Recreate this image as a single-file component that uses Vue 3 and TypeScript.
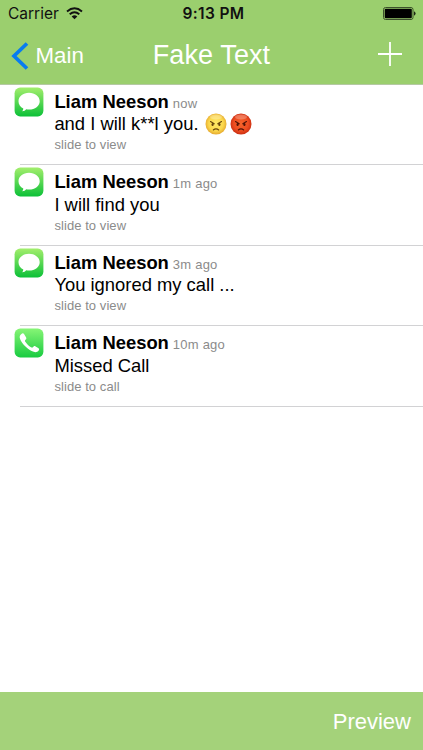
<script setup lang="ts">
interface Notice {
  id: number
  kind: 'message' | 'call'
  name: string
  time: string
  text: string
  hint: string
  faces?: string[]
}

const notices: Notice[] = [
  { id: 1, kind: 'message', name: 'Liam Neeson', time: 'now', text: 'and I will k**l you.', hint: 'slide to view', faces: ['yellow', 'red'] },
  { id: 2, kind: 'message', name: 'Liam Neeson', time: '1m ago', text: 'I will find you', hint: 'slide to view' },
  { id: 3, kind: 'message', name: 'Liam Neeson', time: '3m ago', text: 'You ignored my call ...', hint: 'slide to view' },
  { id: 4, kind: 'call', name: 'Liam Neeson', time: '10m ago', text: 'Missed Call', hint: 'slide to call' },
]
</script>

<template>
  <div class="screen">
    <header class="top">
      <div class="status">
        <div class="carrier">
          <span>Carrier</span>
          <svg class="wifi" width="17" height="13" viewBox="0 0 17 13">
            <g fill="none" stroke="#111" stroke-width="1.9">
              <path d="M1 4.5Q8.500 -1.900 16 4.500" />
              <path d="M3.700 7.300Q8.500 3.200 13.300 7.300" />
            </g>
            <path d="M5.700 9.400Q8.500 7.100 11.300 9.400L8.500 12.300Z" fill="#111" />
          </svg>
        </div>
        <span class="clock">9:13 PM</span>
        <svg class="battery" width="33" height="13" viewBox="0 0 33 13">
          <rect x=".5" y=".5" width="29.500" height="12" rx="2" fill="none" stroke="#3c522b" />
          <rect x="1.700" y="1.700" width="27.100" height="9.600" rx="1" fill="#000" />
          <path d="M31 4.300Q32.600 5 32.600 6.500T31 8.700Z" fill="#1d2815" />
        </svg>
      </div>
      <nav class="nav">
        <button class="back">
          <svg width="18" height="28" viewBox="0 0 18 28">
            <path d="M16 1.500L3 14L16 26.500" fill="none" stroke="#087cf0" stroke-width="3.700" />
          </svg>
          <span>Main</span>
        </button>
        <h1>Fake Text</h1>
        <button class="add" aria-label="Add">
          <svg width="24" height="24" viewBox="0 0 24 24">
            <path d="M12 0V24M0 12H24" stroke="#fff" stroke-width="1.800" />
          </svg>
        </button>
      </nav>
    </header>

    <main class="list">
      <article v-for="n in notices" :key="n.id" class="row">
        <svg class="app-icon" width="30" height="30" viewBox="0 0 30 30">
          <defs>
            <linearGradient :id="'g' + n.id" x1="0" y1="0" x2="0" y2="1">
              <stop offset="0" :stop-color="n.kind === 'call' ? '#86f575' : '#a2ee6c'" />
              <stop offset="1" :stop-color="n.kind === 'call' ? '#19cb41' : '#0cc038'" />
            </linearGradient>
          </defs>
          <rect x=".6" y=".6" width="28.800" height="28.800" rx="5.600" :fill="`url(#g${n.id})`" />
          <path
            v-if="n.kind === 'message'"
            d="M15 5.800C21 5.800 25.700 9.500 25.700 14.200S21 22.600 15 22.600C13.900 22.600 13 22.500 12.200 22.300C11.400 23.500 9.900 24.300 8.200 24.300C8.900 23.500 9.300 22.500 9.300 21.400C6.200 20 4.500 17.300 4.500 14.200C4.500 9.500 9 5.800 15 5.800Z"
            fill="#fff"
          />
          <path
            v-else
            d="M7.400 6C8.500 5 9.500 5.200 10.200 6.300L12 9.200C12.600 10.300 12.400 11 11.500 11.700C10.600 12.400 10.900 13.100 11.500 14C13 16.200 14.800 18 17 19.200C18 19.800 18.600 19.700 19.200 18.900C19.900 18 20.600 17.900 21.600 18.500L24.200 20.100C25.200 20.800 25.400 21.600 24.700 22.500C23.300 24.400 20.800 24.600 18.200 23.300C12.900 20.700 8.300 16.100 6.100 11C5.200 8.900 5.700 7.400 7.400 6Z"
            fill="#fff"
          />
        </svg>
        <div class="body">
          <div class="title"><b>{{ n.name }}</b><span>{{ n.time }}</span></div>
          <div class="text">
            <span>{{ n.text }}</span>
            <span v-if="n.faces" class="faces">
              <svg v-for="f in n.faces" :key="f" width="22" height="22" viewBox="0 0 22 22">
                <defs>
                  <radialGradient :id="f" cx=".5" cy=".48" r=".54">
                    <stop offset="0" :stop-color="f === 'red' ? '#f7652b' : '#ffe967'" />
                    <stop offset=".65" :stop-color="f === 'red' ? '#ed4c20' : '#fbd74c'" />
                    <stop offset="1" :stop-color="f === 'red' ? '#c62b10' : '#e3a42b'" />
                  </radialGradient>
                </defs>
                <circle cx="11" cy="11" r="10.500" :fill="`url(#${f})`" />
                <ellipse cx="11" cy="4" rx="6" ry="2.500" fill="#fff" opacity=".25" />
                <g :stroke="f === 'red' ? '#4d1206' : '#65420b'" fill="none" stroke-width="1.100" stroke-linecap="round">
                  <path d="M5.500 8.500L9.200 10.800M16.500 8.500L12.800 10.800M8.300 17Q11 14.800 13.700 17" />
                </g>
                <g :fill="f === 'red' ? '#4d1206' : '#65420b'">
                  <ellipse cx="7.600" cy="11.500" rx="1.100" ry="1.500" />
                  <ellipse cx="14.400" cy="11.500" rx="1.100" ry="1.500" />
                </g>
              </svg>
            </span>
          </div>
          <div class="hint">{{ n.hint }}</div>
        </div>
      </article>
    </main>

    <footer class="bottom"><button>Preview</button></footer>
  </div>
</template>

<style>
body { margin: 0; background: #fff; }
</style>

<style scoped>
.screen {
  display: flex;
  flex-direction: column;
  width: 423px;
  height: 750px;
  overflow: hidden;
  background: #fff;
  font-family: "Liberation Sans", Arial, sans-serif;
  color: #000;
}
button {
  margin: 0;
  padding: 0;
  border: 0;
  background: none;
  color: #fff;
  font: inherit;
}
svg { display: block; flex: none; }
.top {
  box-sizing: border-box;
  flex: none;
  height: 85px;
  background: #9bcf6e;
  border-bottom: 1px solid #b5c9a3;
}
.status {
  display: grid;
  grid-template-columns: 1fr auto 1fr;
  align-items: center;
  height: 27px;
  padding: 0 7px 0 8px;
  font-family: Inter, sans-serif;
  font-size: 15.5px;
  color: #111;
}
.carrier { display: flex; align-items: center; gap: 7px; letter-spacing: 0; }
.clock { padding-left: 3px; font-weight: 600; font-size: 15.5px; letter-spacing: .35px; }
.battery { justify-self: end; }
.nav {
  display: grid;
  grid-template-columns: 1fr auto 1fr;
  align-items: center;
  height: 57px;
  padding: 0 11px;
}
.back { display: flex; align-items: center; gap: 6.5px; font-size: 22.3px; line-height: 28px; }
h1 { margin: 0 0 2px; font-weight: 400; font-size: 27px; line-height: 32px; letter-spacing: .1px; color: #fff; }
.add { justify-self: end; margin: 0 10px 3px 0; }
.list { flex: 1; margin-top: -.5px; padding-left: 14px; }
.row {
  position: relative;
  box-sizing: border-box;
  display: flex;
  gap: 10.4px;
  height: 80.6px;
  padding-top: 2px;
}
.row::after {
  content: "";
  position: absolute;
  left: 6px;
  right: 0;
  bottom: 0;
  height: 1px;
  background: #d2d2d4;
}
.body { padding-top: 3.1px; }
.title { display: flex; align-items: baseline; gap: 4px; height: 23.4px; line-height: 23px; }
.title b { font-size: 18.4px; }
.title span, .hint { color: #8b8b8b; font-size: 13px; letter-spacing: .22px; }
.text { display: flex; align-items: center; gap: 6.5px; height: 22px; line-height: 22px; font-size: 18.4px; white-space: nowrap; }
.faces { display: flex; gap: 3px; }
.title + .text + .hint { letter-spacing: .07px; }
.hint { height: 20px; line-height: 20px; }
.bottom {
  display: flex;
  flex: none;
  align-items: center;
  justify-content: flex-end;
  height: 58px;
  padding-right: 12px;
  background: #a4d27a;
}
.bottom button { font-size: 22px; padding-top: 1px; }
</style>
